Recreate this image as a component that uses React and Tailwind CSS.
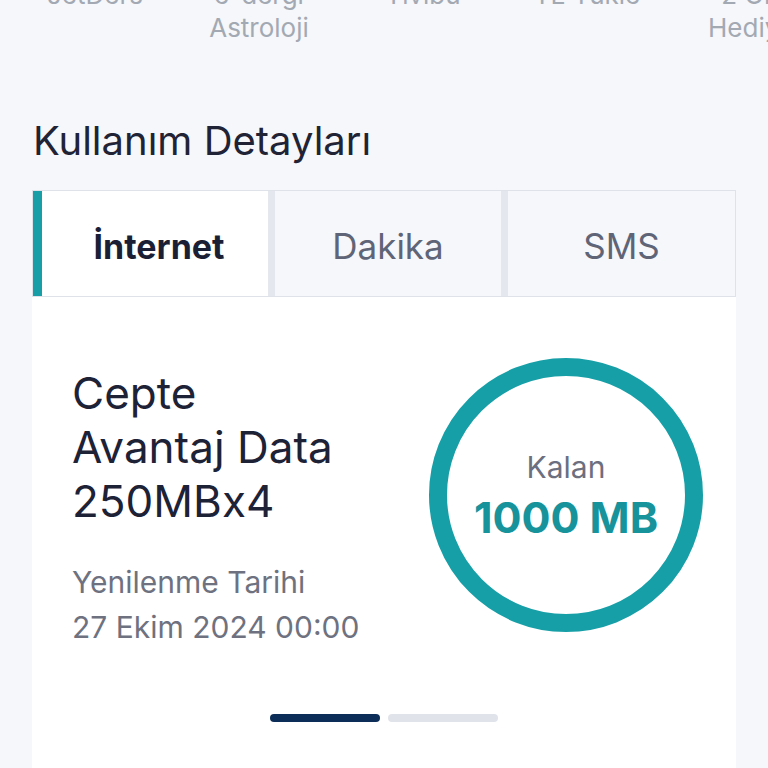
export default function App() {
  const top = [
    ["JetDers", ""],
    ["e-dergi", "Astroloji"],
    ["Tivibu", ""],
    ["TL Yükle", ""],
    ["2 GB", "Hediye"],
  ];
  return (
    <div
      className="w-[768px] h-[768px] overflow-hidden bg-[#f5f7fa]"
      style={{ fontFamily: "Inter, 'Noto Sans', sans-serif" }}
    >
      <div className="h-[60px] overflow-hidden">
        <div className="flex pl-[13px] -mt-[22px]">
          {top.map(([a, b], i) => (
            <div
              key={i}
              className="w-[164px] shrink-0 text-center text-[26px] leading-[33px] text-[#a3a9b3]"
            >
              <div>{a}</div>
              <div>{b}</div>
            </div>
          ))}
        </div>
      </div>

      <h2 className="px-[33px] mt-[58px] text-[40px] leading-[46px] text-[#1f2335]">
        Kullanım Detayları
      </h2>

      <div className="mx-[32px] mt-[26px]">
        <div className="flex h-[107px] gap-[7px] bg-[#e5e7ee] border border-[#dfe2e8]">
          <div className="w-[235px] shrink-0 bg-white border-l-[9px] border-[#179ea6] flex items-center justify-center text-[34px] font-bold text-[#1a1f36] pl-[8px] pt-[5px]">
            İnternet
          </div>
          <div className="w-[226px] shrink-0 bg-[#f6f7fa] flex items-center justify-center text-[35px] text-[#5f6577] pt-[5px]">
            Dakika
          </div>
          <div className="flex-1 bg-[#f6f7fa] flex items-center justify-center text-[35px] text-[#5f6577] pt-[5px]">
            SMS
          </div>
        </div>

        <div className="bg-white h-[480px] px-[40px]">
          <div className="flex items-start">
            <div className="pt-[69px]">
              <div className="text-[44px] leading-[54px] text-[#1d2237]">
                Cepte
                <br />
                Avantaj Data
                <br />
                250MBx4
              </div>
              <div className="mt-[32px] text-[30px] leading-[45px] text-[#6e7280]">
                Yenilenme Tarihi
                <br />
                27 Ekim 2024 00:00
              </div>
            </div>
            <div className="ml-auto mr-[-7px] mt-[61px] w-[274px] h-[274px] shrink-0 rounded-full border-[18px] border-[#169fa7] flex flex-col items-center justify-center gap-[8px]">
              <div className="text-[30px] leading-[36px] text-[#6c6f80]">Kalan</div>
              <div className="text-[43px] leading-[48px] font-bold text-[#16939b]">
                1000 MB
              </div>
            </div>
          </div>
          <div className="flex justify-center gap-[8px] mt-[64px]">
            <div className="w-[110px] h-[8px] rounded-full bg-[#0c2d57]" />
            <div className="w-[110px] h-[8px] rounded-full bg-[#e1e3ea]" />
          </div>
        </div>
      </div>
    </div>
  );
}
